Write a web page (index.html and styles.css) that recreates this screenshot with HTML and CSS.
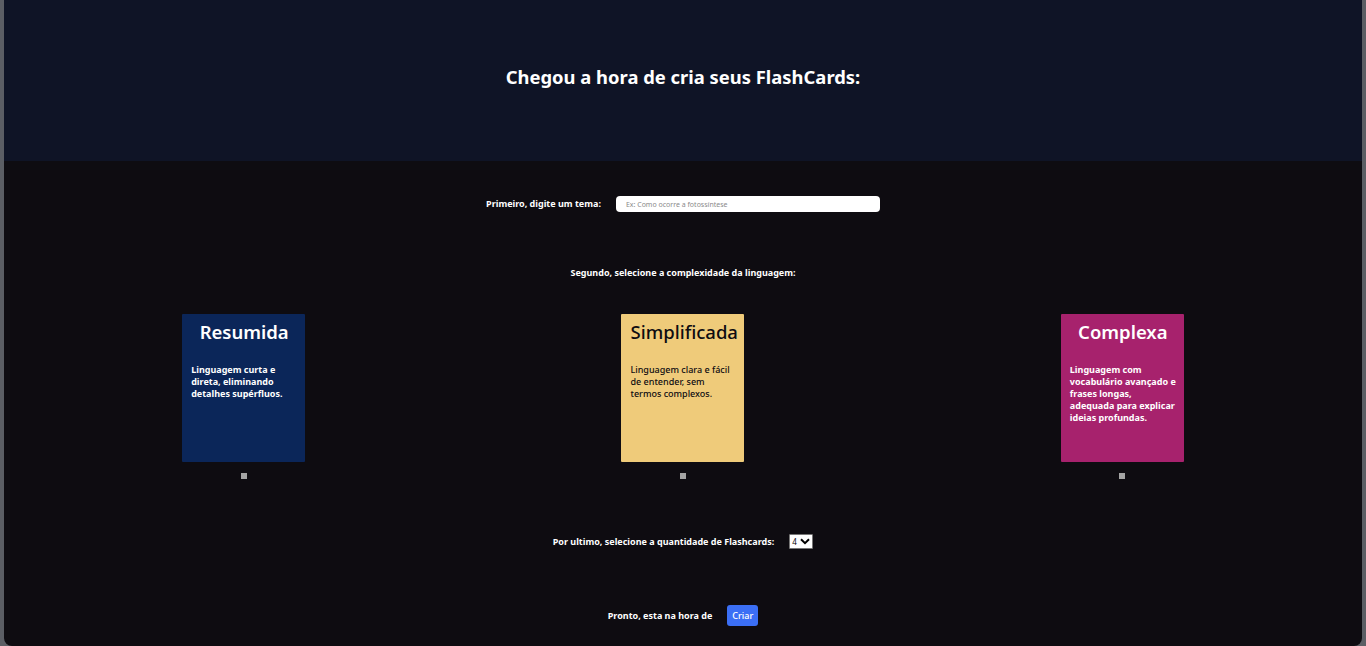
FILE: index.html
```html
<!DOCTYPE html>
<html lang="pt-BR">
<head>
<meta charset="utf-8">
<title>FlashCards</title>
<link rel="stylesheet" href="styles.css">
</head>
<body>
<div class="app">
  <header class="hero">
    <h1 class="hero-title">Chegou a hora de cria seus FlashCards:</h1>
  </header>
  <main class="main">
    <div class="row row-theme">
      <label class="label" for="tema">Primeiro, digite um tema:</label>
      <input class="theme-input" id="tema" type="text" placeholder="Ex: Como ocorre a fotossíntese">
    </div>
    <p class="label row-second">Segundo, selecione a complexidade da linguagem:</p>
    <div class="cards">
      <div class="card-col">
        <div class="card card-blue">
          <h2 class="card-title">Resumida</h2>
          <p class="card-text">Linguagem curta e direta, eliminando detalhes supérfluos.</p>
        </div>
        <input class="check" type="checkbox">
      </div>
      <div class="card-col">
        <div class="card card-yellow">
          <h2 class="card-title">Simplificada</h2>
          <p class="card-text">Linguagem clara e fácil de entender, sem termos complexos.</p>
        </div>
        <input class="check" type="checkbox">
      </div>
      <div class="card-col">
        <div class="card card-pink">
          <h2 class="card-title">Complexa</h2>
          <p class="card-text">Linguagem com vocabulário avançado e frases longas, adequada para explicar ideias profundas.</p>
        </div>
        <input class="check" type="checkbox">
      </div>
    </div>
    <div class="row row-qty">
      <label class="label" for="qtd">Por ultimo, selecione a quantidade de Flashcards:</label>
      <div class="select-wrap">
        <select class="qty-select" id="qtd">
          <option>1</option><option>2</option><option>3</option><option selected>4</option><option>5</option>
        </select>
        <svg class="chev" viewBox="0 0 10 7" width="10" height="7"><path d="M1 1.2 L5 5.2 L9 1.2" fill="none" stroke="#000" stroke-width="2"/></svg>
      </div>
    </div>
    <div class="row row-go">
      <span class="label">Pronto, esta na hora de</span>
      <button class="btn" type="button">Criar</button>
    </div>
  </main>
</div>
</body>
</html>
```

FILE: styles.css
```css
* { box-sizing: border-box; }
html, body { height: 100%; }
body {
  margin: 0;
  background: #5b5e64;
  font-family: "Noto Sans", "Open Sans", sans-serif;
  color: #ffffff;
  padding: 0 4px;
  overflow: hidden;
}
.app {
  height: 646px;
  background: #0e0c11;
  border-radius: 0 0 8px 8px;
  overflow: hidden;
  display: flex;
  flex-direction: column;
}
.hero {
  height: 161px;
  background: #0f1426;
  display: flex;
  align-items: center;
  justify-content: center;
  padding-bottom: 8px;
}
.hero-title {
  margin: 0;
  font-size: 18.4px;
  font-weight: 700;
}
.main {
  flex: 1;
  display: flex;
  flex-direction: column;
  align-items: stretch;
  padding: 35px 20px 0;
}
.label {
  font-size: 9px;
  font-weight: 700;
  line-height: 12px;
  margin: 0;
  color: #ffffff;
}
.row {
  display: flex;
  align-items: center;
  justify-content: center;
}
.row-theme { gap: 15px; height: 16px; }
.theme-input {
  width: 264px;
  height: 16px;
  border: none;
  border-radius: 4px;
  background: #ffffff;
  padding: 0 10px;
  font-family: inherit;
  font-size: 7px;
  color: #222;
  outline: none;
}
.theme-input::placeholder { color: #8a8a8a; }
.row-second {
  text-align: center;
  margin-top: 55px;
}
.cards {
  margin-top: 35px;
  display: grid;
  grid-template-columns: repeat(3, 1fr);
}
.card-col {
  display: flex;
  flex-direction: column;
  align-items: center;
}
.card {
  width: 123px;
  height: 148px;
  border-radius: 1px;
  padding: 4px 8px 0 9px;
}
.card-blue { background: #0b2659; color: #ffffff; }
.card-yellow { background: #efcb7a; color: #0e0c11; }
.card-pink { background: #a7226d; color: #ffffff; }
.card-title {
  margin: 0;
  text-align: center;
  font-size: 18.5px;
  font-weight: 600;
  line-height: 28px;
  white-space: nowrap;
}
.card-yellow .card-title { font-weight: 500; }
.card-text {
  margin: 18px 0 0;
  font-size: 9px;
  font-weight: 700;
  line-height: 12px;
}
.card-yellow .card-text { font-weight: 500; }
.check {
  appearance: none;
  -webkit-appearance: none;
  width: 6px;
  height: 6px;
  margin: 11px 0 0;
  background: #a4a4a4;
  border: none;
  border-radius: 0;
}
.row-qty { margin-top: 55px; gap: 15px; height: 15px; }
.select-wrap {
  position: relative;
  width: 24px;
  height: 15px;
  background: #ffffff;
  border: 1px solid #767676;
  border-radius: 1px;
}
.qty-select {
  appearance: none;
  -webkit-appearance: none;
  display: block;
  width: 100%;
  height: 13px;
  border: none;
  background: transparent;
  font-family: inherit;
  font-size: 8px;
  line-height: 13px;
  color: #000;
  padding: 0 0 0 2px;
  outline: none;
}
.chev {
  position: absolute;
  right: 2px;
  top: 3px;
  pointer-events: none;
}
.row-go { margin-top: 56px; gap: 15px; height: 21px; }
.btn {
  height: 21px;
  padding: 0 5px;
  border: none;
  border-radius: 3px;
  background: #3b6ff5;
  color: #ffffff;
  font-family: inherit;
  font-size: 9px;
  font-weight: 500;
}
```
